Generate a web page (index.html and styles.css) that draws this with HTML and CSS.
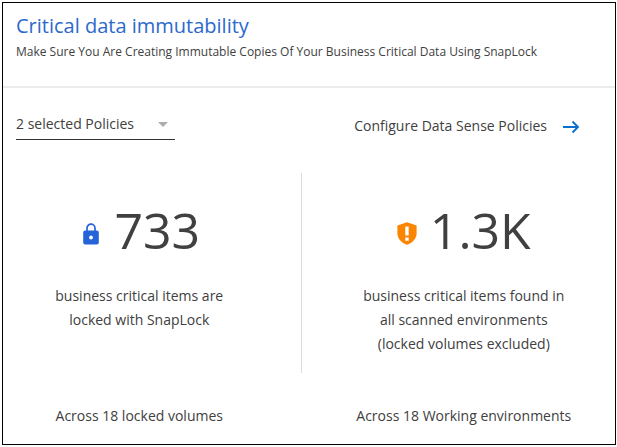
FILE: index.html
```html
<!DOCTYPE html>
<html lang="en">
<head>
<meta charset="utf-8">
<title>Critical data immutability</title>
<link rel="stylesheet" href="styles.css">
</head>
<body>
<section class="card">
  <header class="header">
    <h1 class="title">Critical data immutability</h1>
    <p class="subtitle">Make Sure You Are Creating Immutable Copies Of Your Business Critical Data Using SnapLock</p>
  </header>
  <div class="toolbar">
    <div class="select"><span>2 selected Policies</span>
      <svg class="caret" width="10" height="5" viewBox="0 0 10 5"><path d="M0 0h10L5 5z" fill="#adadad"/></svg>
    </div>
    <a class="link"><span>Configure Data Sense Policies</span>
      <svg class="arrow" width="18" height="14" viewBox="0 0 18 14" fill="none" stroke="#0a6fce" stroke-width="1.9"><path d="M1 7h15M10.500 1.500 16 7l-5.500 5.500"/></svg>
    </a>
  </div>
  <div class="stats">
    <div class="stat stat-locked">
      <div class="figure">
        <svg width="16" height="22" viewBox="0 0 16 22"><path d="M4 8.500V5.200a4 4 0 0 1 8 0v3.300" fill="none" stroke="#2563d9" stroke-width="1.700"/><rect x=".2" y="7.500" width="15.600" height="14" rx="2" fill="#2563d9"/><circle cx="8" cy="14.500" r="1.900" fill="#fff"/></svg>
        <span class="number">733</span>
      </div>
      <p class="text">business critical items are<br>locked with SnapLock</p>
      <p class="foot">Across 18 locked volumes</p>
    </div>
    <div class="rule"></div>
    <div class="stat stat-found">
      <div class="figure">
        <svg width="20" height="23" viewBox="0 0 20 23"><path d="M10 .3 19.600 3.500v8c0 5-4 9.500-9.600 11.200C4.400 21 .4 16.500.4 11.500v-8z" fill="#fb8500"/><path d="M8.300 4.500h3.400v9H8.300zM8.300 15.500h3.400v3.200H8.300z" fill="#fff"/></svg>
        <span class="number">1.3K</span>
      </div>
      <p class="text">business critical items found in<br>all scanned environments<br>(locked volumes excluded)</p>
      <p class="foot">Across 18 Working environments</p>
    </div>
  </div>
</section>
</body>
</html>
```
FILE: styles.css
```css
* { box-sizing: border-box; }
body {
  margin: 0;
  padding: 2px 1px 0 2px;
  background: #fff;
  color: #404040;
  font: 14px/24px "Open Sans", sans-serif;
}
h1, p { margin: 0; }
svg { flex: none; display: block; }
.card {
  height: 443px;
  border: 1px solid #000;
  overflow: hidden;
}
.header {
  height: 85px;
  padding: 9px 13px 0;
  border-bottom: 2px solid #ececec;
}
.title {
  font-size: 20px;
  font-weight: 400;
  line-height: 28px;
  color: #2b69cd;
}
.subtitle {
  font-size: 12px;
  line-height: 18px;
  margin-top: 3px;
  white-space: nowrap;
}
.toolbar {
  display: flex;
  justify-content: space-between;
  height: 85px;
  padding: 24px 35px 0 13px;
}
.select {
  display: flex;
  align-items: center;
  justify-content: space-between;
  width: 159px;
  height: 28px;
  padding: 0 7px 3px 0;
  border-bottom: 1px solid #333;
}
.link {
  display: flex;
  align-items: center;
  gap: 15px;
  height: 24px;
  margin-top: 2px;
}
.arrow { margin-top: 2px; }
.stats {
  display: flex;
  height: 272px;
}
.stat {
  display: flex;
  flex-direction: column;
  align-items: center;
  text-align: center;
  padding-top: 25px;
}
.stat-locked { width: 298px; padding-right: 25px; }
.stat-found { width: 314px; padding-left: 11px; }
.rule { width: 1px; height: 200px; background: #dcdcdc; flex: none; }
.figure {
  display: flex;
  align-items: center;
  gap: 13px;
  height: 64px;
}
.stat-locked .figure { gap: 15px; margin-left: 5px; }
.number { font-size: 50px; line-height: 64px; }
.figure svg { margin-top: 7px; }
.text { height: 142px; padding-top: 22px; }
```
